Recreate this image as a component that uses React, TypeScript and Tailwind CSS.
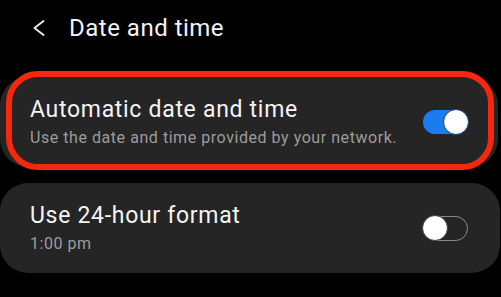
import React from "react";

function Toggle({ on }: { on: boolean }) {
  if (on) {
    return (
      <div className="relative w-[45px] h-[24px] rounded-full bg-[#1b7cf2] flex items-center justify-end shrink-0">
        <div className="w-[26px] h-[26px] rounded-full bg-white border-[1.5px] border-[#0d3f7a] -mr-[1px]" />
      </div>
    );
  }
  return (
    <div className="relative w-[45px] h-[25px] rounded-full border-[1.5px] border-[#8a8a8a] flex items-center justify-start shrink-0">
      <div className="w-[26px] h-[26px] rounded-full bg-white border-[1.5px] border-[#3a3a3a] -ml-[2px]" />
    </div>
  );
}

export default function App() {
  return (
    <div className="w-[501px] h-[297px] bg-black overflow-hidden font-['Roboto',sans-serif] text-[#f4f4f4]">
      <div className="h-[56px] flex items-center pl-[33px]">
        <svg width="12" height="16" viewBox="0 0 12 16" className="shrink-0">
          <polyline points="10.5,1 1.5,8 10.5,15" fill="none" stroke="#f0f0f0" strokeWidth="1.8" strokeLinecap="round" strokeLinejoin="round" />
        </svg>
        <div className="ml-[24px] text-[24px] leading-none tracking-[0.5px]">Date and time</div>
      </div>

      <div className="relative mt-[21px] w-[498px]">
        <div className="h-[90px] rounded-[28px] bg-[#252525] flex items-center pl-[30px] pr-[30px]">
          <div className="flex-1 flex flex-col">
            <div className="text-[23px] leading-[27px] tracking-[0.7px]">Automatic date and time</div>
            <div className="text-[16px] leading-[22px] tracking-[0.55px] text-[#9c9c9c] mt-[4px]">Use the date and time provided by your network.</div>
          </div>
          <Toggle on />
        </div>
        <div className="absolute left-[6px] right-[4px] top-[-6px] bottom-[-3px] rounded-[32px] border-[6px] border-[#f5280f]" />
      </div>

      <div className="mt-[16px] w-[500px] h-[90px] rounded-[28px] bg-[#252525] flex items-center pl-[30px] pr-[32px]">
        <div className="flex-1 flex flex-col">
          <div className="text-[23px] leading-[27px] tracking-[0.7px]">Use 24-hour format</div>
          <div className="text-[16px] leading-[22px] tracking-[0.55px] text-[#9c9c9c] mt-[4px]">1:00 pm</div>
        </div>
        <Toggle on={false} />
      </div>
    </div>
  );
}
